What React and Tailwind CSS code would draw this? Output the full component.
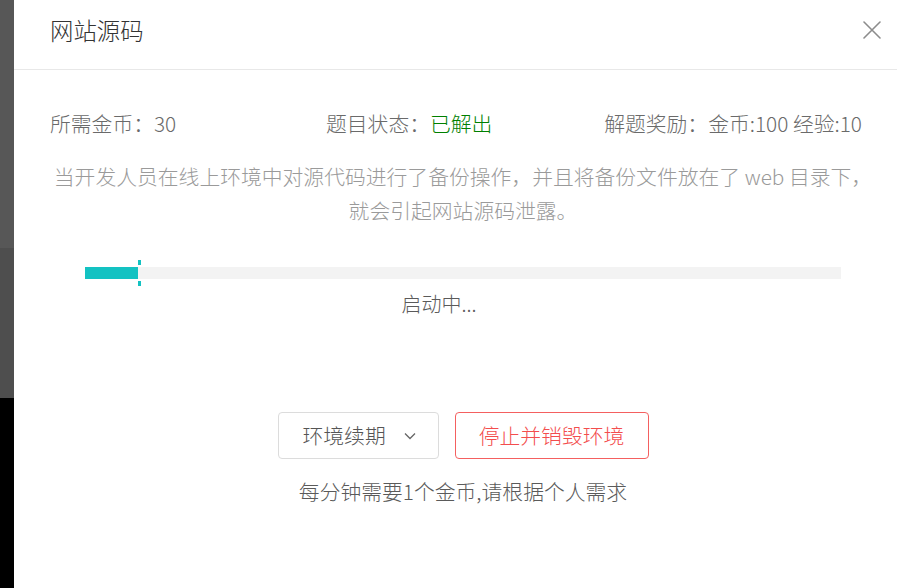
import { useState } from 'react'

// Left edge: the page behind the dialog, dimmed by its mask
function Backdrop() {
  return (
    <div className="w-[14px] shrink-0 flex flex-col">
      <div className="h-[248px] bg-[#575757]"></div>
      <div className="h-[150px] bg-[#4e4e4e]"></div>
      <div className="flex-1 bg-black"></div>
    </div>
  )
}

function CloseIcon() {
  return (
    <svg width="18" height="18" viewBox="0 0 18 18" fill="none">
      <path d="M1 1L17 17M17 1L1 17" stroke="#8c8c8c" strokeWidth="1.6" strokeLinecap="round" />
    </svg>
  )
}

function ChevronDown() {
  return (
    <svg width="12" height="8" viewBox="0 0 12 8" fill="none">
      <path d="M1 1.5L6 6.5L11 1.5" stroke="#666" strokeWidth="1.3" />
    </svg>
  )
}

export default function App() {
  const [progress] = useState(7)

  return (
    <div className="w-[897px] h-[588px] overflow-hidden flex bg-white font-['Noto_Sans_CJK_SC','Noto_Sans',sans-serif] font-light">
      <Backdrop />

      {/* Dialog */}
      <div className="w-[898px] shrink-0 bg-white">
        {/* Header */}
        <div className="h-[70px] flex items-center pl-[36px] pr-[31px] border-b border-[#e8e8e8]">
          <h1 className="text-[23.4px] leading-[30px] text-[#333] -mt-[9px]">网站源码</h1>
          <button className="ml-auto -mt-[9px]">
            <CloseIcon />
          </button>
        </div>

        <div className="px-[36px]">
          {/* Info row */}
          <div className="mt-[39px] flex h-[28px] text-[20.8px] leading-[28px] text-[#6a6a6a] pr-[14px]">
            <div className="w-[276px]">所需金币：30</div>
            <div>
              题目状态：<span className="text-[#008000]">已解出</span>
            </div>
            <div className="ml-auto">解题奖励：金币:100 经验:10</div>
          </div>

          {/* Description */}
          <p className="mt-[22px] text-center text-[20.8px] leading-[34px] text-[#9a9a9a]">
            当开发人员在线上环境中对源代码进行了备份操作，并且将备份文件放在了 web 目录下，就会引起网站源码泄露。
          </p>

          {/* Progress */}
          <div className="mt-[40px] mx-auto w-[756px] h-[12px] bg-[#f3f3f3] relative">
            <div className="h-full bg-[#13c2c2]" style={{ width: `${progress}%` }}></div>
            <div className="absolute left-[53px] -top-[7px] w-[3px] h-[5px] bg-[#13c2c2]"></div>
            <div className="absolute left-[53px] top-[14px] w-[3px] h-[5px] bg-[#13c2c2]"></div>
          </div>
          <div className="mt-[11px] flex justify-center pr-[48px] text-[20px] leading-[28px] text-[#5a5a5a]">
            启动中...
          </div>

          {/* Actions */}
          <div className="mt-[94px] flex justify-center gap-[16px]">
            <button className="h-[47px] w-[161px] flex items-center pl-[24px] border border-[#dcdcdc] rounded-[4px] text-[20.8px] text-[#555]">
              环境续期
              <span className="ml-[18px]">
                <ChevronDown />
              </span>
            </button>
            <button className="h-[47px] w-[194px] flex items-center justify-center border border-[#f46060] rounded-[4px] text-[20.8px] text-[#f34d4d]">
              停止并销毁环境
            </button>
          </div>
          <div className="mt-[18px] text-center text-[20.8px] leading-[28px] text-[#5a5a5a]">
            每分钟需要1个金币,请根据个人需求
          </div>
        </div>
      </div>
    </div>
  )
}
